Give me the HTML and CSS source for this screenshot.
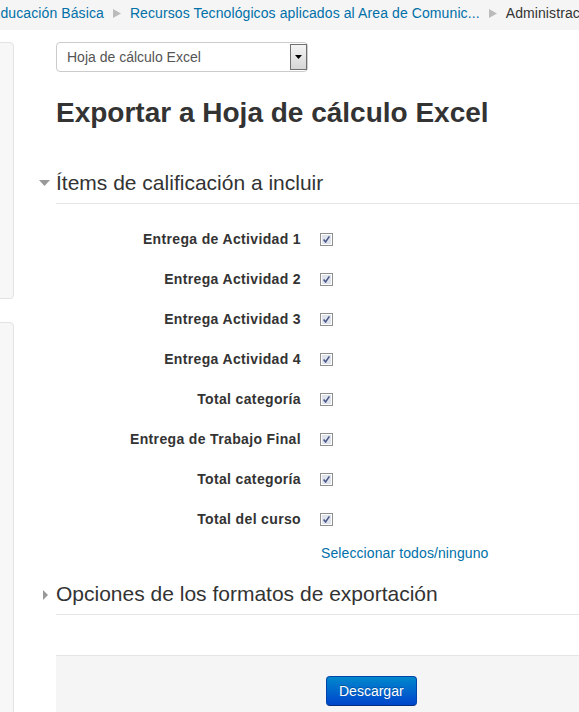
FILE: index.html
```html
<!DOCTYPE html>
<html lang="es">
<head>
    <meta charset="UTF-8">
    <meta name="viewport" content="width=device-width, initial-scale=1.0">
    <title>Exportar a Hoja de cálculo Excel</title>
    <link rel="stylesheet" href="styles.css">
</head>
<body>
    <div class="navbar">
        <nav class="breadcrumb">
            <a href="#">Educación Básica</a>
            <svg class="sep" width="8" height="9" viewBox="0 0 8 9"><path d="M0 0 L8 4.5 L0 9 Z" fill="#bbb"/></svg>
            <a href="#">Recursos Tecnológicos aplicados al Area de Comunic...</a>
            <svg class="sep" width="8" height="9" viewBox="0 0 8 9"><path d="M0 0 L8 4.5 L0 9 Z" fill="#bbb"/></svg>
            <span class="current">Administración de calificaciones</span>
        </nav>
    </div>

    <div class="page">
        <aside class="side">
            <div class="block block-first"></div>
            <div class="block block-second"></div>
        </aside>

        <main class="content">
            <div class="select-wrap">
                <select class="format-select">
                    <option>Hoja de cálculo Excel</option>
                </select>
                <span class="select-btn">
                    <svg width="7" height="4" viewBox="0 0 7 4"><path d="M0 0 L7 0 L3.5 4 Z" fill="#000"/></svg>
                </span>
            </div>

            <h2>Exportar a Hoja de cálculo Excel</h2>

            <form id="exportForm">
                <fieldset class="section">
                    <legend>
                        <svg class="toggle" width="11" height="6" viewBox="0 0 11 6"><path d="M0 0 L11 0 L5.5 6 Z" fill="#999"/></svg>Ítems de calificación a incluir
                    </legend>

                    <div class="items" id="items">
                        <!-- filas generadas por el script -->
                    </div>

                    <a href="#" class="select-all" id="selectAll">Seleccionar todos/ninguno</a>
                </fieldset>

                <fieldset class="section">
                    <legend>
                        <svg class="toggle toggle-closed" width="11" height="10" viewBox="0 0 11 10"><path d="M4 0 L9 5 L4 10 Z" fill="#999"/></svg>Opciones de los formatos de exportación
                    </legend>
                </fieldset>

                <div class="form-actions">
                    <button type="button" class="btn-primary">Descargar</button>
                </div>
            </form>
        </main>
    </div>

    <script>
        const items = document.getElementById('items');
        const names = [
            'Entrega de Actividad 1',
            'Entrega Actividad 2',
            'Entrega Actividad 3',
            'Entrega Actividad 4',
            'Total categoría',
            'Entrega de Trabajo Final',
            'Total categoría',
            'Total del curso'
        ];

        const checkSvg = '<svg width="13" height="13" viewBox="0 0 13 13">' +
            '<rect x="0.5" y="0.5" width="12" height="12" fill="#fff" stroke="#8e8f8f"/>' +
            '<rect x="2" y="2" width="9" height="9" fill="#dfe3ec"/>' +
            '<path d="M3.6 6.4 L5.6 9 L9.4 3.4" stroke="#4a5887" stroke-width="1.6" fill="none"/>' +
            '</svg>';

        // Generar filas de items
        names.forEach((name, i) => {
            const label = document.createElement('label');
            label.className = 'item-label';
            label.htmlFor = 'item' + i;
            label.textContent = name;

            const box = document.createElement('span');
            box.className = 'check';
            box.id = 'item' + i;
            box.dataset.checked = '1';
            box.innerHTML = checkSvg;

            items.appendChild(label);
            items.appendChild(box);
        });
    </script>
</body>
</html>
```

FILE: styles.css
```css
body {
    font-family: "Liberation Sans", Arial, sans-serif;
    font-size: 14px;
    line-height: 20px;
    color: #333;
    background-color: #fff;
    margin: 0;
    padding: 0;
    overflow: hidden;
}

a {
    color: #0070a8;
    text-decoration: none;
}

/* Breadcrumb */
.navbar {
    background-color: #f5f5f5;
    height: 30px;
    overflow: hidden;
}

.breadcrumb {
    display: flex;
    align-items: center;
    white-space: nowrap;
    margin-left: -9px;
    padding-top: 3px;
    line-height: 20px;
    letter-spacing: 0.1px;
}

.breadcrumb .sep {
    margin: 0 9px 0 9px;
    flex-shrink: 0;
}

.breadcrumb .current {
    color: #333;
}

/* Layout */
.page {
    display: flex;
    padding-top: 12px;
}

.side {
    width: 13px;
    flex-shrink: 0;
    display: flex;
    flex-direction: column;
    gap: 23px;
}

.block {
    margin-left: -10px;
    width: 22px;
    background-color: #f7f7f7;
    border: 1px solid #e3e3e3;
    border-radius: 4px;
}

.block-first {
    height: 255px;
}

.block-second {
    height: 420px;
}

.content {
    flex: 1;
    padding-left: 43px;
    min-width: 0;
}

/* Select */
.select-wrap {
    position: relative;
    width: 252px;
}

.format-select {
    appearance: none;
    -webkit-appearance: none;
    display: block;
    width: 252px;
    height: 30px;
    padding: 0 0 0 10px;
    font-family: "Liberation Sans", Arial, sans-serif;
    font-size: 14px;
    color: #555;
    background-color: #fff;
    border: 1px solid #ccc;
    border-radius: 4px;
}

.select-btn {
    position: absolute;
    top: 2px;
    right: 1px;
    width: 15px;
    height: 24px;
    display: flex;
    align-items: center;
    justify-content: center;
    border: 1px solid #6f6f6f;
    background: linear-gradient(#f4f4f4, #d6d6d6);
}

h2 {
    font-size: 28px;
    line-height: 36px;
    font-weight: bold;
    color: #333;
    margin: 23px 0 32px;
}

/* Fieldsets */
.section {
    border: none;
    margin: 0;
    padding: 0;
    min-width: 0;
}

legend {
    display: block;
    width: 100%;
    padding: 0;
    font-size: 21px;
    line-height: 40px;
    color: #333;
    border-bottom: 1px solid #e5e5e5;
}

.toggle {
    margin-left: -17px;
    margin-right: 6px;
    vertical-align: 4px;
}

.toggle-closed {
    vertical-align: 1px;
}

.items {
    display: grid;
    grid-template-columns: 245px 13px;
    column-gap: 19px;
    grid-auto-rows: 40px;
    align-items: center;
    margin-top: 15px;
}

.item-label {
    text-align: right;
    font-weight: bold;
    letter-spacing: 0.35px;
}

.check {
    display: block;
    width: 13px;
    height: 13px;
}

.check svg {
    display: block;
}

.select-all {
    display: block;
    margin: 4px 0 11px 265px;
    line-height: 20px;
    letter-spacing: 0.1px;
}

/* Acciones */
.form-actions {
    margin-top: 40px;
    padding: 20px 20px 20px 270px;
    background-color: #f5f5f5;
    border-top: 1px solid #e5e5e5;
}

.btn-primary {
    font-family: "Liberation Sans", Arial, sans-serif;
    font-size: 14px;
    line-height: 20px;
    padding: 4px 12px;
    color: #fff;
    text-shadow: 0 -1px 0 rgba(0, 0, 0, 0.25);
    background: linear-gradient(#0088cc, #0044cc);
    border: 1px solid #0044aa;
    border-bottom-color: #00307a;
    border-radius: 4px;
    cursor: pointer;
}
```
